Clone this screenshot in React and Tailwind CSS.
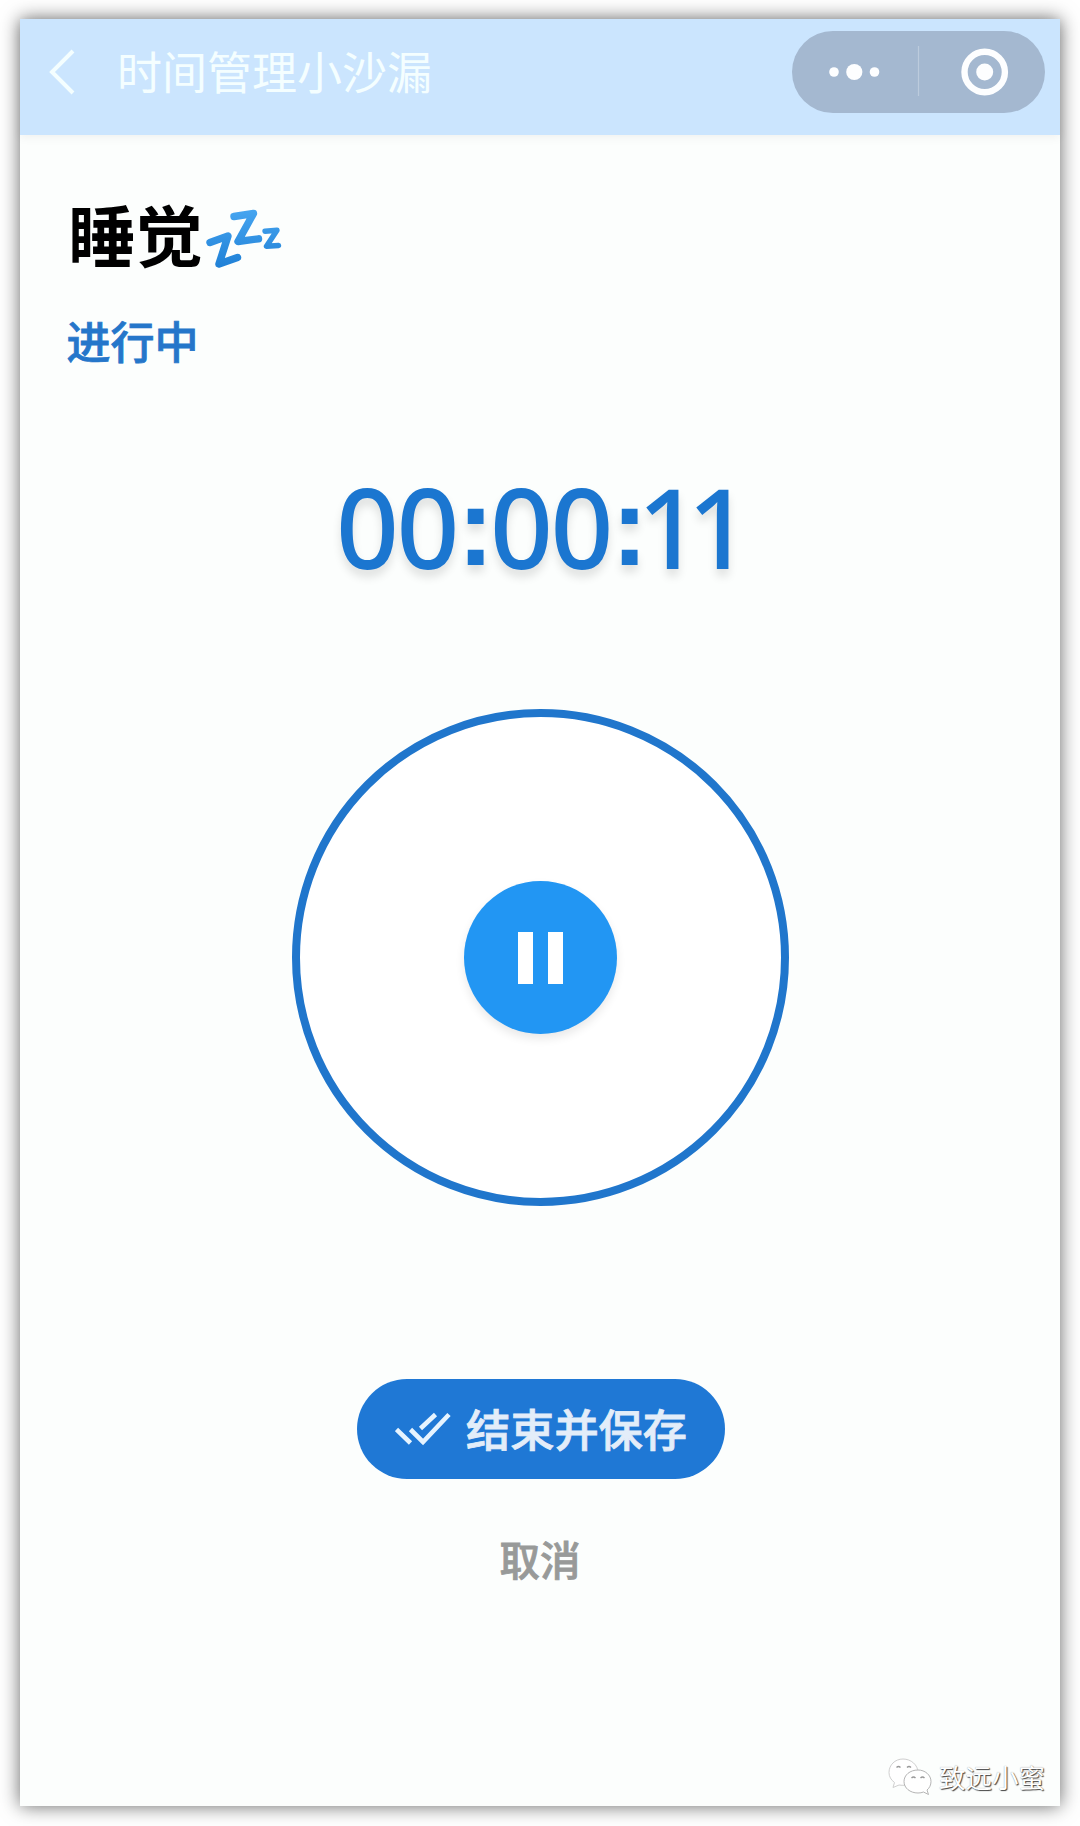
import React, { useState } from 'react';

function TitleBar() {
    return (
        <header className="flex h-[116px] shrink-0 items-start bg-[#cbe5fe] pl-[29px] pr-[15px] pt-3 shadow-[0_2px_10px_rgba(0,0,0,0.06)]">
            <button className="mt-[18px] h-[46px] w-[26px]" aria-label="back">
                <svg viewBox="0 0 26 46" className="h-full w-full" fill="none" stroke="#f4feff" strokeWidth="4">
                    <path d="M24 2 3 23l21 21" />
                </svg>
            </button>
            <h1 className="ml-[42px] mt-[8px] grow text-[45px] leading-[64px] font-normal text-[#f4feff]">
                时间管理小沙漏
            </h1>
            <div className="flex h-[82px] w-[253px] items-center rounded-full bg-[#a4b8d0]">
                <svg viewBox="0 0 253 82" className="h-full w-full" fill="#fdfeff">
                    <circle cx="42" cy="41" r="4.8" />
                    <circle cx="62.3" cy="41" r="8.1" />
                    <circle cx="82.5" cy="41" r="4.8" />
                    <path d="M126.5 15v50" stroke="#bccbdd" strokeWidth="1.2" />
                    <circle cx="192.7" cy="41" r="20.2" fill="none" stroke="#fdfeff" strokeWidth="6.4" />
                    <circle cx="192.7" cy="41" r="8.5" />
                </svg>
            </div>
        </header>
    );
}

function Zzz() {
    return (
        <svg viewBox="204 208 80 60" className="h-[60px] w-[80px]" fill="none" stroke="url(#zzz)" strokeLinecap="round" strokeLinejoin="round">
            <defs>
                <linearGradient id="zzz" gradientUnits="userSpaceOnUse" x1="0" y1="210" x2="0" y2="268">
                    <stop offset="0" stopColor="#46a5f0" />
                    <stop offset="1" stopColor="#1f80d6" />
                </linearGradient>
            </defs>
            <path d="M210 242.500 228 236 219 264 237.500 257.500" strokeWidth="7.400" />
            <path d="M234 216.500 253.500 213.500 238 241.500 258.500 238.800" strokeWidth="7.400" />
            <path d="M265 231.200 277 230.200 266.500 246.300 278.500 245.500" strokeWidth="5.400" />
        </svg>
    );
}

function Timer({ value }) {
    const [h, m, s] = value.split(':');
    const colon = "relative -top-[4px] font-['Liberation_Sans',sans-serif] text-[112px] font-bold";

    return (
        <div className="h-[125px] pl-[316px] font-['Noto_Sans',sans-serif] text-[110px] leading-[120px] font-medium whitespace-nowrap text-[#1b76d0] [text-shadow:0_7px_10px_rgba(0,0,0,0.12)]">
            <span className="tracking-[-2.400px]">{h}</span>
            <span className={`${colon} tracking-[-4.300px]`}>:</span>
            <span className="tracking-[-2.400px]">{m}</span>
            <span className={`${colon} tracking-[-11px]`}>:</span>
            <span className="tracking-[-12.900px]">{s}</span>
        </div>
    );
}

function Dial({ paused, onToggle }) {
    return (
        <div className="flex size-[497px] items-center justify-center rounded-full border-[8.500px] border-[#2076cc] bg-white">
            <button
                onClick={onToggle}
                aria-label="toggle"
                className="flex size-[153px] items-center justify-center rounded-full bg-[#2296f3] shadow-[0_5px_10px_rgba(0,0,0,0.09)]"
            >
                {paused ? (
                    <svg viewBox="0 0 24 24" className="size-[90px]" fill="#fff">
                        <path d="M8 5v14l11-7z" />
                    </svg>
                ) : (
                    <span className="flex gap-[15px]">
                        <span className="h-[52px] w-[15px] bg-white" />
                        <span className="h-[52px] w-[15px] bg-white" />
                    </span>
                )}
            </button>
        </div>
    );
}

function Watermark() {
    return (
        <div className="absolute right-[15px] bottom-[9px] flex items-center">
            <svg viewBox="0 0 46 40" className="mr-[6px] h-[40px] w-[46px]" fill="#fff" stroke="#b5b5b5" strokeWidth="1">
                <path d="M16 2C8 2 2 8 2 15.500c0 4 2 7.500 5.500 10L6 30.500l6-2.500c8 1.500 19-2 19-12.500C31 8 24 2 16 2Z" stroke="#cfcfcf" />
                <path d="M31 13c-8 0-14 5-14 11.500S23 36 31 36c2 0 4-.3 5.500-1l5 2.500-1.500-4.500c2.500-2 4-5 4-8.500C44 18 38 13 31 13Z" />
                <path d="M9.500 10.500q2-2 4 0M20 10.500q2-2 4 0M24.500 21q2-2 4 0M33.500 21q2-2 4 0" fill="none" stroke="#999" strokeWidth="1.400" />
            </svg>
            <span className="text-[26.500px] leading-[36px] text-white [text-shadow:1px_1px_1px_#444,0_0_1px_#999]">
                致远小蜜
            </span>
        </div>
    );
}

export default function App() {
    const [paused, setPaused] = useState(false);

    return (
        <div className="h-[1826px] w-[1080px] overflow-hidden bg-white pt-[19px] pl-[20px] font-['Noto_Sans_CJK_SC',sans-serif]">
            <div className="relative flex h-[1787px] w-[1040px] flex-col bg-[#fcfefd] shadow-[0_0_18px_rgba(0,0,0,0.6)]">
                <TitleBar />

                <div className="mt-[50px] flex h-[96px] items-start pl-[48px]">
                    <h2 className="text-[67.500px] leading-[96px] font-bold text-black">睡觉</h2>
                    <div className="mt-[23px] ml-px">
                        <Zzz />
                    </div>
                </div>
                <p className="mt-[27px] pl-[46.500px] text-[44px] leading-[64px] font-medium text-[#2576ca] [-webkit-text-stroke:0.800px_#2576ca]">
                    进行中
                </p>

                <div className="mt-[94px]">
                    <Timer value="00:00:11" />
                </div>

                <div className="mt-[118px] flex justify-center">
                    <Dial paused={paused} onToggle={() => setPaused(!paused)} />
                </div>

                <div className="mt-[173px] flex flex-col items-center">
                    <button className="ml-[2px] flex h-[100px] w-[368px] items-center rounded-full bg-[#1f78d5] pl-[38px]">
                        <svg viewBox="385 1395 56 34" className="h-[34px] w-[56px]" fill="none" stroke="#e6f4ff" strokeWidth="4.600">
                            <path d="M386.500 1412.500 400.500 1426M400.500 1412.500 413 1425 439 1397.500M410.500 1411.500 425.500 1397.500" />
                        </svg>
                        <span className="ml-[15px] -mt-[2px] text-[44.200px] leading-[64px] font-medium text-[#e3edf9] [-webkit-text-stroke:0.800px_#e3edf9]">
                            结束并保存
                        </span>
                    </button>
                    <button className="mt-[50px] text-[40.500px] leading-[60px] font-medium text-[#989a99] [-webkit-text-stroke:0.800px_#989a99]">
                        取消
                    </button>
                </div>

                <Watermark />
            </div>
        </div>
    );
}
